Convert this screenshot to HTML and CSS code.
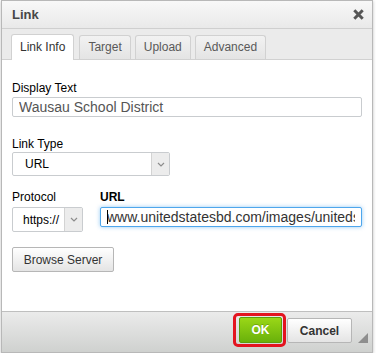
FILE: index.html
```html
<!DOCTYPE html>
<html lang="en">
  <head>
    <meta charset="UTF-8" />
    <meta name="viewport" content="width=device-width, initial-scale=1.0" />
    <title>Link</title>
    <link rel="stylesheet" href="styles.css">
  </head>
  <body>
    <div class="dialog">
      <!-- Title bar -->
      <div class="dialog-title">
        <span>Link</span>
        <a class="dialog-close" title="Close">
          <svg width="11" height="11" viewBox="0 0 11 11">
            <path d="M1.3 1.3L9.7 9.7M9.7 1.3L1.3 9.7" stroke="#555" stroke-width="3" fill="none" />
          </svg>
        </a>
      </div>

      <!-- Tabs -->
      <div class="tabs">
        <span class="tab active">Link Info</span>
        <span class="tab">Target</span>
        <span class="tab">Upload</span>
        <span class="tab">Advanced</span>
      </div>

      <div class="dialog-body">
        <div class="field">
          <label for="display_text">Display Text</label>
          <input type="text" id="display_text" class="text-input" value="Wausau School District" />
        </div>

        <div class="field field-type">
          <label for="link_type">Link Type</label>
          <div class="select select-type">
            <select id="link_type">
              <option>URL</option>
            </select>
            <span class="select-arrow">
              <svg width="8" height="5" viewBox="0 0 8 5">
                <path d="M1 1l3 3 3-3" stroke="#8c8c8c" stroke-width="1.2" fill="none" />
              </svg>
            </span>
          </div>
        </div>

        <div class="field-row">
          <div class="field field-protocol">
            <label for="protocol">Protocol</label>
            <div class="select select-protocol">
              <select id="protocol">
                <option>https://</option>
              </select>
              <span class="select-arrow">
                <svg width="8" height="5" viewBox="0 0 8 5">
                  <path d="M1 1l3 3 3-3" stroke="#8c8c8c" stroke-width="1.2" fill="none" />
                </svg>
              </span>
            </div>
          </div>

          <div class="field field-url">
            <label for="url" class="label-bold">URL</label>
            <div class="url-wrap">
              <input type="text" id="url" class="text-input url-input" value="www.unitedstatesbd.com/images/unitedstatesbd.png" />
              <!-- text cursor -->
              <span class="caret"></span>
            </div>
          </div>
        </div>

        <button type="button" class="btn btn-browse">Browse Server</button>
      </div>

      <!-- Footer -->
      <div class="dialog-footer">
        <span class="highlight">
          <button type="button" class="btn btn-ok">OK</button>
        </span>
        <button type="button" class="btn btn-cancel">Cancel</button>
        <span class="resize-grip"></span>
      </div>
    </div>
  </body>
</html>
```

FILE: styles.css
```css
/* Global Styles */
body {
  font-family: "Liberation Sans", Arial, sans-serif;
  background-color: #fff;
  margin: 0;
  padding: 0;
  color: #000;
}

.dialog {
  width: 370px;
  margin-left: 1px;
  border: 1px solid #b8b8b8;
  box-shadow: 0 1px 3px rgba(0, 0, 0, 0.25);
}

/* Title bar */
.dialog-title {
  height: 27px;
  padding: 0 8px 0 10px;
  border-bottom: 1px solid #cfcfcf;
  background: linear-gradient(#f8f8f8, #e9e9e9);
  display: flex;
  align-items: center;
  justify-content: space-between;
  font-size: 13px;
  font-weight: bold;
  color: #474747;
}

.dialog-close {
  display: flex;
  cursor: pointer;
}

/* Tabs */
.tabs {
  height: 30px;
  padding-left: 9px;
  background-color: #ebebeb;
  border-bottom: 1px solid #d1d1d1;
  display: flex;
  align-items: flex-end;
  gap: 4px;
}

.tab {
  box-sizing: border-box;
  height: 24px;
  line-height: 22px;
  padding: 0 8px;
  border: 1px solid #d1d1d1;
  border-bottom: none;
  border-radius: 3px 3px 0 0;
  background: linear-gradient(#f2f2f2, #e4e4e4);
  font-size: 12px;
  color: #595959;
}

.tab.active {
  height: 26px;
  line-height: 24px;
  margin-bottom: -1px;
  margin-right: 1px;
  background: #fff;
  color: #333;
}

/* Body */
.dialog-body {
  box-sizing: border-box;
  height: 251px;
  padding: 21px 10px 0;
  background-color: #fff;
}

label {
  display: block;
  font-size: 12px;
  line-height: 15px;
  color: #000;
}

.label-bold {
  font-weight: bold;
}

.text-input {
  display: block;
  box-sizing: border-box;
  width: 100%;
  height: 20px;
  margin: 1px 0 0;
  padding: 0 6px;
  border: 1px solid #c9cccf;
  border-radius: 2px;
  font-family: "Liberation Sans", Arial, sans-serif;
  font-size: 14px;
  color: #555;
  outline: none;
}

.field-type {
  margin-top: 20px;
}

.select {
  box-sizing: border-box;
  display: flex;
  border: 1px solid #c9cccf;
  border-radius: 2px;
  background-color: #fff;
  overflow: hidden;
}

.select select {
  flex: 1;
  min-width: 0;
  appearance: none;
  -webkit-appearance: none;
  border: none;
  background: transparent;
  font-family: "Liberation Sans", Arial, sans-serif;
  font-size: 12px;
  color: #000;
  outline: none;
}

.select-arrow {
  width: 17px;
  border-left: 1px solid #d3d3d3;
  background-color: #ececec;
  display: flex;
  align-items: center;
  justify-content: center;
}

.select-type {
  width: 158px;
  height: 24px;
}

.select-type select {
  padding-left: 12px;
}

.field-row {
  margin-top: 14px;
  display: flex;
  gap: 17px;
}

.field-protocol .select {
  width: 71px;
  height: 25px;
  margin-top: 2px;
}

.field-protocol select {
  padding-left: 10px;
}

.field-url {
  flex: 1;
}

.url-wrap {
  position: relative;
  margin-top: 2px;
}

.url-input {
  margin: 0;
  color: #333;
  border-color: #4ea6ec;
  box-shadow: 0 0 4px rgba(78, 166, 236, 0.6);
}

.caret {
  position: absolute;
  left: 7px;
  top: 3px;
  width: 1px;
  height: 14px;
  background-color: #000;
}

/* Buttons */
.btn {
  box-sizing: border-box;
  height: 25px;
  padding: 0 10px;
  border: 1px solid #b6b6b6;
  border-radius: 2px;
  background: linear-gradient(#fff, #e4e4e4);
  font-family: "Liberation Sans", Arial, sans-serif;
  font-size: 12px;
  color: #333;
  cursor: pointer;
}

.btn-browse {
  margin-top: 15px;
  width: 102px;
}

/* Footer */
.dialog-footer {
  position: relative;
  box-sizing: border-box;
  height: 41px;
  padding: 1px 20px 0 0;
  border-top: 1px solid #bfbfbf;
  background: linear-gradient(#ebebeb, #cfd1cf);
  display: flex;
  justify-content: flex-end;
  align-items: flex-start;
}

.highlight {
  display: flex;
  padding: 1px 1px 1px 3px;
  border: 3px solid #e3141f;
  border-radius: 5px;
}

.btn-ok {
  width: 43px;
  height: 26px;
  padding: 0;
  border-color: #5c9c0d;
  background: linear-gradient(#9ad717, #69b10b);
  color: #fff;
  font-weight: bold;
  text-shadow: 0 -1px 0 rgba(0, 0, 0, 0.2);
}

.btn-cancel {
  width: 65px;
  margin: 5px 0 0 1px;
  font-weight: bold;
  color: #333;
}

.resize-grip {
  position: absolute;
  right: 4px;
  bottom: 9px;
  width: 0;
  height: 0;
  border-left: 10px solid transparent;
  border-bottom: 10px solid #8e8e8e;
}
```
